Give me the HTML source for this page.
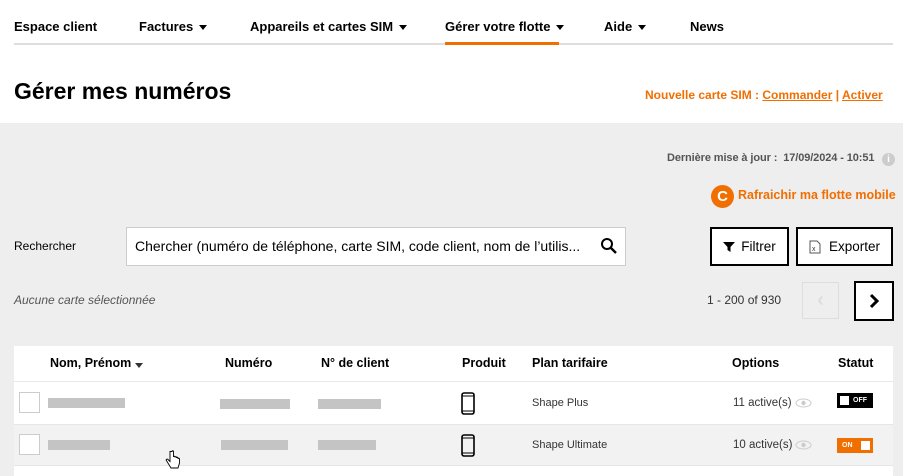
<!DOCTYPE html><html><head><meta charset="utf-8"><style>
*{margin:0;padding:0;box-sizing:border-box}
body{width:903px;height:476px;overflow:hidden;font-family:"Liberation Sans",Arial,sans-serif;background:#fff;position:relative;color:#000}
.a{position:absolute;white-space:nowrap}
.nav{font-size:13px;font-weight:bold;top:19px}
.tri{display:inline-block;width:0;height:0;border-left:4px solid transparent;border-right:4px solid transparent;border-top:5px solid #000;margin-left:6px;vertical-align:1px}
.or{color:#f16e00}
.gray{position:absolute;left:0;top:123px;width:903px;height:353px;background:#eee}
.btn{position:absolute;border:2px solid #000;background:#fff;font-size:13px;font-weight:bold;display:flex;align-items:center;justify-content:center}
.bar{position:absolute;height:10px;background:#c4c4c4}
.th{font-size:12.5px;font-weight:bold;top:356px}
.td{font-size:11px;color:#333}
.cb{position:absolute;left:19px;width:21px;height:21px;border:1px solid #ccc;background:#fff}
</style></head><body>
<div class="a nav" style="left:14px">Espace client</div>
<div class="a nav" style="left:139px">Factures<span class="tri"></span></div>
<div class="a nav" style="left:250px">Appareils et cartes SIM<span class="tri"></span></div>
<div class="a nav" style="left:445px">Gérer votre flotte<span class="tri"></span></div>
<div class="a nav" style="left:604px">Aide<span class="tri"></span></div>
<div class="a nav" style="left:690px">News</div>
<div class="a" style="left:14px;top:43px;width:879px;height:2px;background:#ddd"></div>
<div class="a" style="left:445px;top:42px;width:114px;height:3px;background:#f16e00"></div>
<div class="a" style="left:14px;top:78px;font-size:23px;font-weight:bold">Gérer mes numéros</div>
<div class="a or" style="left:645px;top:88px;font-size:12px;font-weight:bold">Nouvelle carte SIM : <u>Commander</u> | <u>Activer</u></div>
<div class="gray"></div>
<div class="a" style="left:667px;top:152px;font-size:11px;font-weight:bold;color:#555;letter-spacing:-0.1px">Dernière mise à jour :&nbsp; 17/09/2024 - 10:51</div>
<div class="a" style="left:882px;top:153px;width:13px;height:13px;border-radius:50%;background:#ccc;color:#fff;font-size:10px;text-align:center;line-height:13px;font-weight:bold">i</div>
<div class="a" style="left:711px;top:185px;width:23px;height:23px;border-radius:50%;background:#f16e00;color:#fff;font-size:15px;font-weight:bold;text-align:center;line-height:23px">C</div>
<div class="a or" style="left:738px;top:188px;font-size:12.5px;font-weight:bold">Rafraichir ma flotte mobile</div>
<div class="a" style="left:14px;top:239px;font-size:12px">Rechercher</div>
<div class="a" style="left:126px;top:227px;width:500px;height:39px;background:#fff;border:1px solid #ccc;font-size:14px;padding:10px 0 0 8px">Chercher (numéro de téléphone, carte SIM, code client, nom de l’utilis...</div>
<svg class="a" style="left:600px;top:237px" width="18" height="18" viewBox="0 0 18 18"><circle cx="7" cy="7" r="5" fill="none" stroke="#000" stroke-width="2"/><path d="M11 11l5 5" stroke="#000" stroke-width="2.4"/></svg>
<div class="btn" style="left:710px;top:227px;width:79px;height:39px;font-weight:normal;font-size:13.5px"><svg width="12" height="12" viewBox="0 0 12 12" style="margin-right:6px"><path d="M0 1h12L7.5 6v5L4.5 9V6z"/></svg>Filtrer</div>
<div class="btn" style="left:796px;top:227px;width:97px;height:39px;font-weight:normal;font-size:13.5px"><svg width="12" height="14" viewBox="0 0 12 14" style="margin-right:8px"><path d="M1 1h7l3 3v9H1z" fill="#fff" stroke="#555"/><text x="3" y="11" font-size="7" fill="#333">x</text></svg>Exporter</div>
<div class="a" style="left:14px;top:293px;font-size:12px;font-style:italic;color:#555">Aucune carte sélectionnée</div>
<div class="a" style="left:707px;top:293px;font-size:12px;color:#333">1 - 200 of 930</div>
<div class="a" style="left:802px;top:282px;width:37px;height:37px;border:1px solid #ddd;color:#ddd;font-size:20px;text-align:center;line-height:34px;font-weight:bold">‹</div>
<div class="a" style="left:854px;top:281px;width:40px;height:40px;border:2px solid #000;background:#fff"><svg width="36" height="36" viewBox="0 0 36 36"><path d="M15 12l6 6-6 6" fill="none" stroke="#000" stroke-width="3"/></svg></div>
<div class="a" style="left:14px;top:346px;width:879px;height:130px;background:#fff"></div>
<div class="a" style="left:14px;top:381px;width:879px;height:1px;background:#e8e8e8"></div>
<div class="a" style="left:14px;top:424px;width:879px;height:42px;background:#f2f2f2;border-top:1px solid #e6e6e6;border-bottom:1px solid #e6e6e6"></div>
<div class="a th" style="left:50px">Nom, Prénom<span class="tri" style="border-top-color:#333;margin-left:4px;vertical-align:-1px"></span></div>
<div class="a th" style="left:225px">Numéro</div>
<div class="a th" style="left:321px">N° de client</div>
<div class="a th" style="left:462px">Produit</div>
<div class="a th" style="left:532px">Plan tarifaire</div>
<div class="a th" style="left:732px">Options</div>
<div class="a th" style="left:838px">Statut</div>
<div class="cb" style="top:392px"></div><div class="cb" style="top:434px"></div>
<div class="bar" style="left:48px;top:398px;width:77px"></div>
<div class="bar" style="left:220px;top:399px;width:70px"></div>
<div class="bar" style="left:318px;top:399px;width:63px"></div>
<div class="bar" style="left:48px;top:440px;width:62px"></div>
<div class="bar" style="left:221px;top:440px;width:67px"></div>
<div class="bar" style="left:318px;top:440px;width:58px"></div>
<svg class="a" style="left:461px;top:392px" width="14" height="23" viewBox="0 0 14 23"><rect x="1" y="1" width="12" height="21" rx="2" fill="none" stroke="#000" stroke-width="1.6"/><path d="M1 4h12M1 19h12" stroke="#000"/></svg>
<svg class="a" style="left:461px;top:434px" width="14" height="23" viewBox="0 0 14 23"><rect x="1" y="1" width="12" height="21" rx="2" fill="none" stroke="#000" stroke-width="1.6"/><path d="M1 4h12M1 19h12" stroke="#000"/></svg>
<div class="a td" style="left:532px;top:397px">Shape Plus</div>
<div class="a td" style="left:532px;top:439px">Shape Ultimate</div>
<div class="a td" style="left:733px;top:397px;font-size:11.5px">11 active(s)</div>
<div class="a td" style="left:733px;top:439px;font-size:11.5px">10 active(s)</div>
<svg class="a" style="left:795px;top:398px" width="17" height="10" viewBox="0 0 17 10"><ellipse cx="8.5" cy="5" rx="7.5" ry="4" fill="none" stroke="#ccc"/><circle cx="8.5" cy="5" r="2.2" fill="#ccc"/></svg>
<svg class="a" style="left:795px;top:440px" width="17" height="10" viewBox="0 0 17 10"><ellipse cx="8.5" cy="5" rx="7.5" ry="4" fill="none" stroke="#ccc"/><circle cx="8.5" cy="5" r="2.2" fill="#ccc"/></svg>
<div class="a" style="left:837px;top:393px;width:36px;height:15px;background:#000"><div style="position:absolute;left:3px;top:3px;width:9px;height:9px;background:#fff"></div><span style="position:absolute;left:16px;top:4px;color:#fff;font-size:7px;font-weight:bold;line-height:8px">OFF</span></div>
<div class="a" style="left:837px;top:438px;width:36px;height:15px;background:#f16e00"><span style="position:absolute;left:5px;top:4px;color:#fff;font-size:7px;font-weight:bold;line-height:8px">ON</span><div style="position:absolute;right:3px;top:3px;width:9px;height:9px;background:#fff"></div></div>
<svg class="a" style="left:165px;top:450px" width="16" height="20" viewBox="0 0 16 20"><path d="M5 1.5v10l-2-2c-1-1-2.5 0-1.5 1.2L6 18h7l1.5-5v-4c0-1-1.5-1-1.5 0V8c0-1-1.5-1-1.5 0v-.5c0-1-1.5-1-1.5 0V7c0-1-1.5-1-1.5 0V1.5c0-1-1.5-1-1.5 0z" fill="#fff" stroke="#000" stroke-width="0.9"/></svg>
</body></html>
